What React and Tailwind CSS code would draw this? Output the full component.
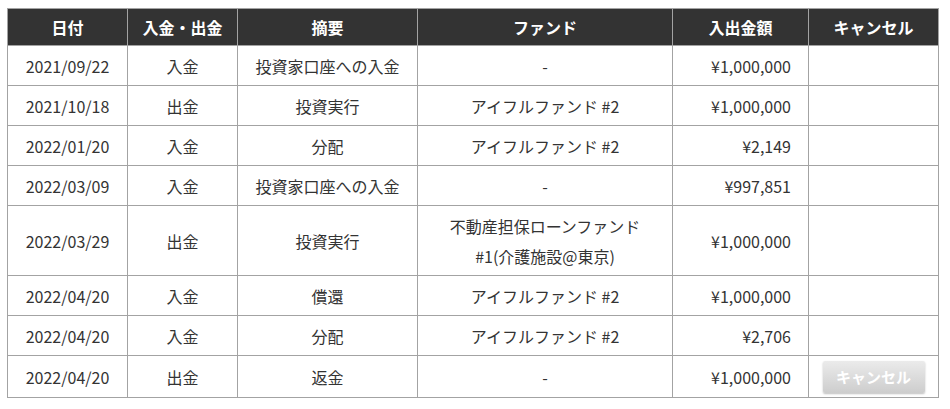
// App.jsx — 入出金履歴 table
const ROWS = [
  { date: '2021/09/22', type: '入金', memo: '投資家口座への入金', fund: '-', amount: '¥1,000,000' },
  { date: '2021/10/18', type: '出金', memo: '投資実行', fund: 'アイフルファンド #2', amount: '¥1,000,000' },
  { date: '2022/01/20', type: '入金', memo: '分配', fund: 'アイフルファンド #2', amount: '¥2,149' },
  { date: '2022/03/09', type: '入金', memo: '投資家口座への入金', fund: '-', amount: '¥997,851' },
  { date: '2022/03/29', type: '出金', memo: '投資実行', fund: ['不動産担保ローンファンド', '#1(介護施設@東京)'], amount: '¥1,000,000' },
  { date: '2022/04/20', type: '入金', memo: '償還', fund: 'アイフルファンド #2', amount: '¥1,000,000' },
  { date: '2022/04/20', type: '入金', memo: '分配', fund: 'アイフルファンド #2', amount: '¥2,706' },
  { date: '2022/04/20', type: '出金', memo: '返金', fund: '-', amount: '¥1,000,000', cancel: true },
];

const HEADERS = ['日付', '入金・出金', '摘要', 'ファンド', '入出金額', 'キャンセル'];

export default function App() {
  return (
    <div
      className="bg-white w-[950px] h-[409px] pt-[8px] pl-[7px] text-[#333] text-[16px]"
      style={{ fontFamily: '"Noto Sans CJK JP", "Noto Sans", sans-serif' }}
    >
      <table className="border-collapse table-fixed w-[931px] border border-[#a3a3a3]">
        <colgroup>
          <col className="w-[120px]" />
          <col className="w-[110px]" />
          <col className="w-[180px]" />
          <col className="w-[255px]" />
          <col className="w-[136px]" />
          <col className="w-[130px]" />
        </colgroup>
        <thead>
          <tr className="bg-[#333333] text-white">
            {HEADERS.map(h => (
              <th key={h} className="border border-[#a3a3a3] h-[37px] py-0 font-bold leading-[28px] text-center">
                {h}
              </th>
            ))}
          </tr>
        </thead>
        <tbody>
          {ROWS.map((r, i) => (
            <tr key={i}>
              <td className="border border-[#a3a3a3] py-[4.5px] text-center leading-[30px]">{r.date}</td>
              <td className="border border-[#a3a3a3] py-[4.5px] text-center leading-[30px]">{r.type}</td>
              <td className="border border-[#a3a3a3] py-[4.5px] text-center leading-[30px]">{r.memo}</td>
              <td className="border border-[#a3a3a3] py-[4.5px] text-center leading-[30px]">
                {Array.isArray(r.fund)
                  ? r.fund.map(line => <div key={line}>{line}</div>)
                  : r.fund}
              </td>
              <td className="border border-[#a3a3a3] py-[4.5px] pr-[17px] text-right leading-[30px]">{r.amount}</td>
              <td className="border border-[#a3a3a3] py-[4.5px] text-center leading-[30px]">
                {r.cancel && (
                  <button className="block mx-auto w-[102px] h-[32px] rounded-[2px] bg-gradient-to-b from-[#ebebeb] to-[#cdcdcd] text-white font-bold text-[15px] leading-[32px] shadow-[0_1px_2px_rgba(0,0,0,0.25)]">
                    キャンセル
                  </button>
                )}
              </td>
            </tr>
          ))}
        </tbody>
      </table>
    </div>
  );
}
